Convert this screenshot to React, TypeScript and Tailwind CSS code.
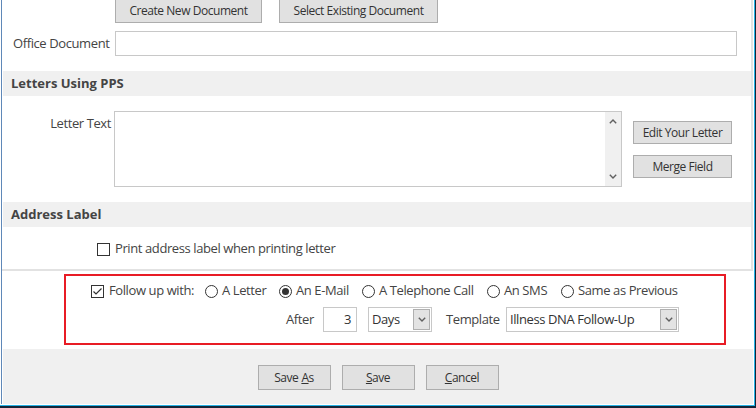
import React from "react";

const Btn = ({ children, className = "" }: { children: React.ReactNode; className?: string }) => (
  <div
    className={`flex items-center justify-center bg-[#e1e1e1] border border-[#adadad] text-[#333333] text-[12px] tracking-[-0.45px] leading-none box-border ${className}`}
  >
    {children}
  </div>
);

const Check = ({ checked = false }: { checked?: boolean }) => (
  <span className="w-[13px] h-[13px] border border-[#333333] bg-white box-border flex items-center justify-center shrink-0">
    {checked && (
      <svg width="11" height="11" viewBox="0 0 11 11">
        <polyline points="1.5,5.5 4,8 9.5,2.5" fill="none" stroke="#333333" strokeWidth="1.2" />
      </svg>
    )}
  </span>
);

const Radio = ({ checked = false }: { checked?: boolean }) => (
  <span className="w-[13px] h-[13px] rounded-full border border-[#333333] bg-white box-border flex items-center justify-center shrink-0">
    {checked && <span className="w-[7px] h-[7px] rounded-full bg-[#333333]" />}
  </span>
);

const Chevron = ({ up = false }: { up?: boolean }) => (
  <svg width="8" height="5" viewBox="0 0 8 5">
    <polyline
      points={up ? "0.8,4.2 4,1 7.2,4.2" : "0.8,0.8 4,4 7.2,0.8"}
      fill="none"
      stroke="#606060"
      strokeWidth="1.4"
    />
  </svg>
);

const Select = ({ value, className = "" }: { value: string; className?: string }) => (
  <div className={`h-[25px] border border-[#c8c8c8] bg-white box-border flex items-center justify-between pl-[3px] pr-px ${className}`}>
    <span className="text-[#333333] leading-none">{value}</span>
    <span className="w-[17px] h-[21px] bg-[#e3e3e3] border border-[#b0b0b0] box-border flex items-center justify-center">
      <Chevron />
    </span>
  </div>
);

const RadioItem = ({ label, checked = false, className = "" }: { label: string; checked?: boolean; className?: string }) => (
  <div className={`flex items-center gap-[4px] ${className}`}>
    <Radio checked={checked} />
    <span>{label}</span>
  </div>
);

export default function App() {
  return (
    <div
      className="w-[756px] h-[408px] bg-[#132638] pr-px pb-[2px] box-border overflow-hidden text-[13px] tracking-[-0.4px] text-[#444444]"
      style={{ fontFamily: '"Open Sans", "Noto Sans", sans-serif' }}
    >
      <div className="w-full h-full bg-[#27b3e6] pr-px pb-px box-border">
        <div className="w-full h-full bg-white pl-px pr-px pb-px box-border">
          <div className="w-full h-full border-l border-[#5f88b8] box-border flex flex-col">
            {/* Top scroll panel */}
            <div className="h-[271px] shrink-0 border-b-2 border-r-2 border-[#e2e2e2] box-border overflow-hidden flex flex-col">
              <div className="flex mt-[-1px] ml-[113px] gap-[17px]">
                <Btn className="w-[147px] h-[24px]">Create New Document</Btn>
                <Btn className="w-[159px] h-[24px]">Select Existing Document</Btn>
              </div>
              <div className="flex items-center mt-[8px]">
                <div className="w-[113px] pl-[11px] leading-none">Office Document</div>
                <div className="w-[622px] h-[25px] border border-[#c8c8c8] box-border bg-white" />
              </div>
              <div className="mt-[15px] ml-px h-[25px] bg-[#f0f0f0] flex items-center pl-[8px] font-bold tracking-normal text-[#444444]">
                Letters Using PPS
              </div>
              <div className="flex mt-[15px]">
                <div className="w-[112px] pr-[3px] text-right pt-[6px] leading-none">Letter Text</div>
                <div className="w-[508px] h-[76px] border border-[#c8c8c8] box-border bg-white flex justify-end">
                  <div className="w-[16px] h-full bg-[#f0f0f0] flex flex-col items-center justify-between py-[7px]">
                    <Chevron up />
                    <Chevron />
                  </div>
                </div>
                <div className="flex flex-col ml-[11px] mt-[10px] gap-[11px]">
                  <Btn className="w-[99px] h-[23px]">Edit Your Letter</Btn>
                  <Btn className="w-[99px] h-[23px]">Merge Field</Btn>
                </div>
              </div>
              <div className="mt-[15px] ml-px h-[25px] bg-[#f0f0f0] flex items-center pl-[8px] font-bold tracking-normal text-[#444444]">
                Address Label
              </div>
              <div className="flex items-center h-[20px] mt-[12px] ml-[95px] gap-[5px]">
                <Check />
                <span>Print address label when printing letter</span>
              </div>
            </div>

            {/* Follow-up area */}
            <div className="h-[78px] shrink-0 pt-[3px] pl-[62px] box-border bg-white">
              <div className="w-[662px] h-[71px] border-2 border-[#e81c25] box-border flex flex-col">
                <div className="flex items-center h-[20px] mt-[5px] ml-[25px]">
                  <div className="flex items-center gap-[5px] w-[114px]">
                    <Check checked />
                    <span>Follow up with:</span>
                  </div>
                  <RadioItem label="A Letter" className="w-[74px]" />
                  <RadioItem label="An E-Mail" checked className="w-[83px]" />
                  <RadioItem label="A Telephone Call" className="w-[125px]" />
                  <RadioItem label="An SMS" className="w-[74px]" />
                  <RadioItem label="Same as Previous" />
                </div>
                <div className="flex items-center mt-[6px] ml-[220px]">
                  <span className="w-[37px]">After</span>
                  <div className="w-[34px] h-[25px] border border-[#c8c8c8] box-border bg-white flex items-center justify-end pr-[5px] text-[#333333]">
                    3
                  </div>
                  <Select value="Days" className="w-[64px] ml-[11px]" />
                  <span className="ml-[14px] w-[60px]">Template</span>
                  <Select value="Illness DNA Follow-Up" className="w-[173px]" />
                </div>
              </div>
            </div>

            {/* Bottom bar */}
            <div className="flex-1 ml-px bg-[#f0f0f0] flex justify-center items-start pt-[16px] gap-[11px]">
              <Btn className="w-[73px] h-[25px]">
                Save <span className="underline ml-[3px]">A</span>s
              </Btn>
              <Btn className="w-[73px] h-[25px]">
                <span className="underline">S</span>ave
              </Btn>
              <Btn className="w-[73px] h-[25px]">
                <span className="underline">C</span>ancel
              </Btn>
            </div>
          </div>
        </div>
      </div>
    </div>
  );
}
